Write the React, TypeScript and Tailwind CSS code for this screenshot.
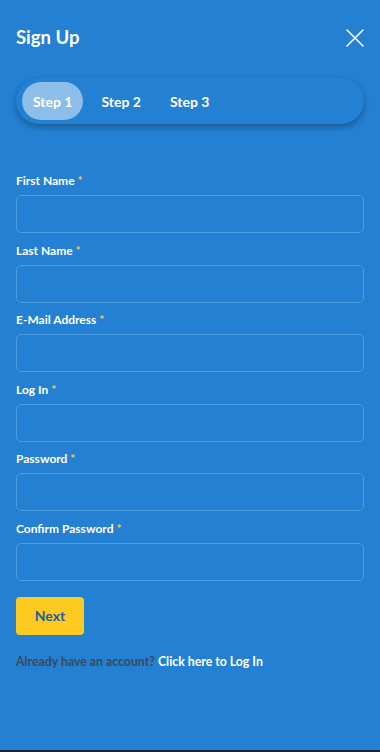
import React from "react";

const fields = [
  "First Name",
  "Last Name",
  "E-Mail Address",
  "Log In",
  "Password",
  "Confirm Password",
];

export default function App() {
  return (
    <div
      className="w-[380px] h-[752px] bg-[#2380d3] flex flex-col overflow-hidden"
      style={{ fontFamily: "Lato, 'Noto Sans', sans-serif" }}
    >
      <div className="flex-1 flex flex-col px-4">
        <div className="flex items-center justify-between pt-[25px] h-[50px]">
          <h1 className="text-[18.5px] font-bold text-white">Sign Up</h1>
          <svg width="18" height="18" viewBox="0 0 18 18">
            <path d="M1 1 L17 17 M17 1 L1 17" stroke="white" strokeWidth="1.6" strokeLinecap="round" />
          </svg>
        </div>

        <div className="mt-[28px] h-[46px] rounded-full bg-[#2380d3] shadow-[0_3px_6px_rgba(0,0,0,0.3)] flex items-center px-[6px] gap-[7px]">
          <div className="h-[38px] px-[11px] rounded-full bg-[#8dbde9] flex items-center text-[14px] font-bold text-white">
            Step 1
          </div>
          <div className="h-[38px] px-[11px] rounded-full flex items-center text-[14px] font-bold text-white">
            Step 2
          </div>
          <div className="h-[38px] px-[11px] rounded-full flex items-center text-[14px] font-bold text-white">
            Step 3
          </div>
        </div>

        <div className="mt-[49px] flex flex-col gap-[9.6px]">
          {fields.map((f) => (
            <div key={f} className="flex flex-col">
              <label className="h-[16px] leading-[16px] text-[12px] font-bold text-white mb-[6px]">
                {f} <span className="text-[#f7cb3a]">*</span>
              </label>
              <div className="h-[38px] rounded-[5px] border border-[#4d9be0]" />
            </div>
          ))}
        </div>

        <button className="mt-[16px] w-[68px] h-[38px] rounded-[4px] bg-[#fdca22] text-[#1f5b9e] text-[14px] font-bold self-start">
          Next
        </button>

        <p className="mt-[18px] text-[12.3px] font-bold text-[#394a5c]">
          Already have an account? <span className="text-white">Click here to Log In</span>
        </p>
      </div>
      <div className="h-[2px] bg-[#1a2433]" />
    </div>
  );
}
